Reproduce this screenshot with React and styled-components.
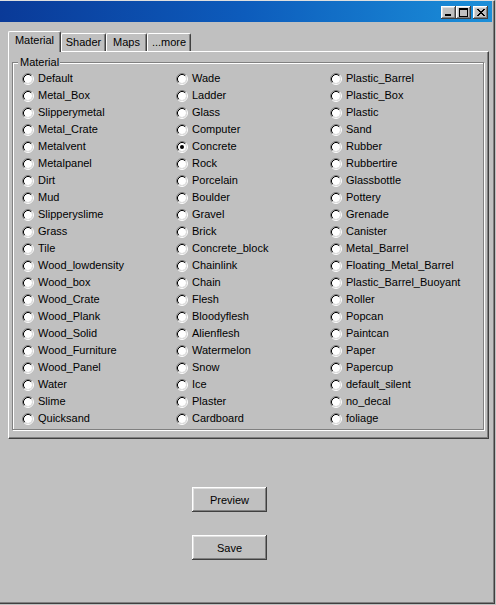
import React from "react";
import styled, { createGlobalStyle } from "styled-components";

const columns = [
  [
    "Default", "Metal_Box", "Slipperymetal", "Metal_Crate", "Metalvent", "Metalpanel", "Dirt",
    "Mud", "Slipperyslime", "Grass", "Tile", "Wood_lowdensity", "Wood_box", "Wood_Crate",
    "Wood_Plank", "Wood_Solid", "Wood_Furniture", "Wood_Panel", "Water", "Slime", "Quicksand",
  ],
  [
    "Wade", "Ladder", "Glass", "Computer", "Concrete", "Rock", "Porcelain", "Boulder", "Gravel",
    "Brick", "Concrete_block", "Chainlink", "Chain", "Flesh", "Bloodyflesh", "Alienflesh",
    "Watermelon", "Snow", "Ice", "Plaster", "Cardboard",
  ],
  [
    "Plastic_Barrel", "Plastic_Box", "Plastic", "Sand", "Rubber", "Rubbertire", "Glassbottle",
    "Pottery", "Grenade", "Canister", "Metal_Barrel", "Floating_Metal_Barrel",
    "Plastic_Barrel_Buoyant", "Roller", "Popcan", "Paintcan", "Paper", "Papercup",
    "default_silent", "no_decal", "foliage",
  ],
];

const tabs = [
  { label: "Material", width: 53 },
  { label: "Shader", width: 45 },
  { label: "Maps", width: 41 },
  { label: "...more", width: 44 },
];

const RadioIcon = ({ checked }) => (
  <svg width="12" height="12" viewBox="0 0 12 12">
    <circle cx="6" cy="6" r="4" fill="#fff" />
    <path d="M2.11 9.89 A5.5 5.5 0 0 1 9.89 2.11" fill="none" stroke="#808080" />
    <path d="M9.89 2.11 A5.5 5.5 0 0 1 2.11 9.89" fill="none" stroke="#fff" />
    <path d="M2.82 9.18 A4.5 4.5 0 0 1 9.18 2.82" fill="none" stroke="#000" />
    <path d="M9.18 2.82 A4.5 4.5 0 0 1 2.82 9.18" fill="none" stroke="#dfdfdf" />
    {checked && <circle cx="6" cy="6" r="2" fill="#000" />}
  </svg>
);

const MinIcon = () => (
  <svg width="15" height="13" viewBox="0 0 15 13" shapeRendering="crispEdges">
    <rect x="4" y="8" width="6" height="2" fill="#000" />
  </svg>
);

const MaxIcon = () => (
  <svg width="15" height="13" viewBox="0 0 15 13" shapeRendering="crispEdges">
    <rect x="3" y="2" width="9" height="2" fill="#000" />
    <rect x="3" y="2" width="1" height="9" fill="#000" />
    <rect x="11" y="2" width="1" height="9" fill="#000" />
    <rect x="3" y="10" width="9" height="1" fill="#000" />
  </svg>
);

const CloseIcon = () => (
  <svg width="15" height="13" viewBox="0 0 15 13" shapeRendering="crispEdges">
    {Array.from({ length: 7 }, (_, i) => (
      <React.Fragment key={i}>
        <rect x={4 + i} y={3 + i} width="2" height="1" fill="#000" />
        <rect x={10 - i} y={3 + i} width="2" height="1" fill="#000" />
      </React.Fragment>
    ))}
  </svg>
);

const App = () => (
  <>
    <GlobalStyle />
    <Window>
      <TitleBar>
        <CaptionButton><MinIcon /></CaptionButton>
        <CaptionButton><MaxIcon /></CaptionButton>
        <CaptionButton $gap><CloseIcon /></CaptionButton>
      </TitleBar>
      <Body>
        <TabRow>
          {tabs.map((t, i) => (
            <Tab key={t.label} $active={i === 0} $width={t.width}>
              {t.label}
            </Tab>
          ))}
        </TabRow>
        <Panel>
          <GroupBox>
            <Legend>Material</Legend>
            <RadioGrid>
              {columns.flat().map((name) => (
                <RadioRow key={name}>
                  <RadioIcon checked={name === "Concrete"} />
                  <span>{name}</span>
                </RadioRow>
              ))}
            </RadioGrid>
          </GroupBox>
        </Panel>
        <Button $top={48}>Preview</Button>
        <Button $top={23}>Save</Button>
      </Body>
    </Window>
  </>
);

export default App;

const GlobalStyle = createGlobalStyle`
  html, body {
    margin: 0;
    padding: 0;
    background: #c0c0c0;
  }

  body {
    font-family: "Liberation Sans", Arial, sans-serif;
    font-size: 11px;
    color: #000;
  }
`;

const Window = styled.div`
  box-sizing: border-box;
  width: 495px;
  height: 604px;
  border-top: 1px solid #dfdfdf;
  border-right: 1px solid #404040;
  border-bottom: 1px solid #404040;
  box-shadow: inset -1px -1px 0 #808080;
  background: #c0c0c0;
`;

const TitleBar = styled.div`
  display: flex;
  justify-content: flex-end;
  align-items: flex-start;
  box-sizing: border-box;
  height: 21px;
  margin-right: 2px;
  padding: 5px 4px 0 0;
  background: linear-gradient(to right, #0a3a98, #0d5cbc 50%, #1b8fd9);
`;

const CaptionButton = styled.div`
  width: 15px;
  height: 13px;
  margin-left: ${(p) => (p.$gap ? 2 : 0)}px;
  background: #c0c0c0;
  box-shadow: inset -1px -1px 0 #404040, inset 1px 1px 0 #fff,
    inset -2px -2px 0 #808080, inset 2px 2px 0 #dfdfdf;

  svg {
    display: block;
  }
`;

const Body = styled.div`
  padding: 9px 0 0 8px;
`;

const TabRow = styled.div`
  display: flex;
  align-items: flex-end;
  height: 20px;
`;

const Tab = styled.div`
  position: relative;
  z-index: ${(p) => (p.$active ? 1 : 0)};
  box-sizing: border-box;
  width: ${(p) => p.$width}px;
  height: ${(p) => (p.$active ? 21 : 18)}px;
  margin-bottom: ${(p) => (p.$active ? -1 : 0)}px;
  padding-top: 2px;
  border: 1px solid #fff;
  border-right-color: #404040;
  border-bottom: none;
  border-radius: 2px 2px 0 0;
  box-shadow: inset -1px 0 0 #808080;
  background: #c0c0c0;
  line-height: 13px;
  text-align: center;
  white-space: nowrap;
`;

const Panel = styled.div`
  box-sizing: border-box;
  width: 481px;
  height: 388px;
  padding: 4px 4px 0 3px;
  border-top: 1px solid #fff;
  border-left: 1px solid #fff;
  border-right: 1px solid #404040;
  border-bottom: 1px solid #404040;
  box-shadow: inset -1px -1px 0 #808080;
`;

const GroupBox = styled.fieldset`
  margin: 0;
  min-width: 0;
  padding: 1px 0 2px 9px;
  border: 1px solid #808080;
  box-shadow: inset 1px 1px 0 #fff, 1px 1px 0 #fff;
`;

const Legend = styled.legend`
  margin-left: -4px;
  padding: 0 1px 0 2px;
  line-height: 13px;
  background: #c0c0c0;
`;

const RadioGrid = styled.div`
  display: grid;
  grid-template-columns: repeat(3, 154px);
  grid-template-rows: repeat(21, 17px);
  grid-auto-flow: column;
`;

const RadioRow = styled.div`
  display: flex;
  align-items: center;
  gap: 4px;
  line-height: 13px;
  white-space: nowrap;

  svg {
    flex: 0 0 auto;
    display: block;
  }
`;

const Button = styled.button`
  display: block;
  box-sizing: border-box;
  width: 75px;
  height: 25px;
  margin: ${(p) => p.$top}px 0 0 184px;
  padding: 0;
  border: 0 none;
  background: #c0c0c0;
  box-shadow: inset -1px -1px 0 #404040, inset 1px 1px 0 #fff,
    inset -2px -2px 0 #808080, inset 2px 2px 0 #dfdfdf;
  font: inherit;
  color: #000;
`;
